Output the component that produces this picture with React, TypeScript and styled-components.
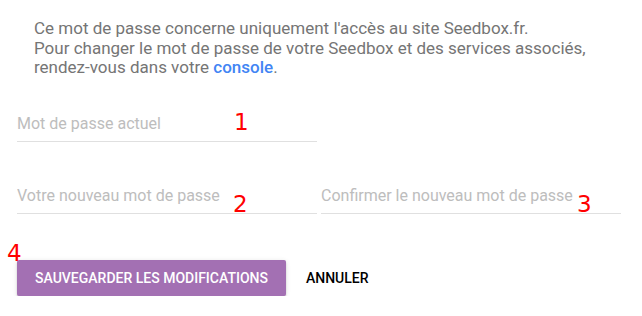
import styled, { createGlobalStyle } from "styled-components";

const GlobalStyle = createGlobalStyle`
  html, body {
    margin: 0;
    padding: 0;
    background: #ffffff;
  }
  body {
    font-family: Roboto, "Liberation Sans", sans-serif;
  }
`;

const Page = styled.div`
  width: 642px;
  padding: 0 21px 0 17px;
  box-sizing: border-box;
`;

const Intro = styled.p`
  margin: 0;
  padding: 19px 0 0 17px;
  font-size: 17px;
  line-height: 19.5px;
  color: #757575;
`;

const Link = styled.a`
  color: #4285f4;
  font-weight: 500;
  text-decoration: none;
`;

const Row = styled.div<{ $top: number }>`
  display: flex;
  gap: 4px;
  margin-top: ${(p) => p.$top}px;
`;

const Field = styled.div`
  position: relative;
  width: 300px;
`;

const Input = styled.input`
  display: block;
  width: 100%;
  height: 35px;
  box-sizing: border-box;
  padding: 0;
  border: none;
  border-bottom: 1px solid #e0e0e0;
  outline: none;
  background: transparent;
  font-family: Roboto, "Liberation Sans", sans-serif;
  font-size: 16px;
  color: #424242;
  &::placeholder {
    color: #bdbdbd;
  }
`;

const Marker = styled.span<{ $left: number; $top: number }>`
  position: absolute;
  left: ${(p) => p.$left}px;
  top: ${(p) => p.$top}px;
  font-family: "DejaVu Sans", sans-serif;
  font-size: 23px;
  line-height: 1;
  color: #ff0000;
  pointer-events: none;
`;

const Actions = styled.div`
  position: relative;
  display: flex;
  align-items: center;
  margin-top: 46px;
`;

const Button = styled.button<{ $primary?: boolean }>`
  height: 36px;
  padding: 0 ${(p) => (p.$primary ? 18 : 20)}px;
  border: none;
  border-radius: 2px;
  font-family: Roboto, "Liberation Sans", sans-serif;
  font-size: 14px;
  font-weight: 500;
  text-transform: uppercase;
  cursor: pointer;
  background: ${(p) => (p.$primary ? "#a370b3" : "transparent")};
  color: ${(p) => (p.$primary ? "#ffffff" : "#000000")};
  box-shadow: ${(p) =>
    p.$primary
      ? "0 2px 2px rgba(0,0,0,0.14), 0 3px 1px -2px rgba(0,0,0,0.2), 0 1px 5px rgba(0,0,0,0.12)"
      : "none"};
`;

export default function App() {
  return (
    <>
      <GlobalStyle />
      <Page>
        <Intro>
          Ce mot de passe concerne uniquement l'accès au site Seedbox.fr.
          <br />
          Pour changer le mot de passe de votre Seedbox et des services associés,
          <br />
          rendez-vous dans votre <Link href="#">console</Link>.
        </Intro>

        <Row $top={29}>
          <Field>
            <Input type="password" placeholder="Mot de passe actuel" />
            <Marker $left={217} $top={4}>1</Marker>
          </Field>
        </Row>

        <Row $top={37}>
          <Field>
            <Input type="password" placeholder="Votre nouveau mot de passe" />
            <Marker $left={216} $top={14}>2</Marker>
          </Field>
          <Field>
            <Input type="password" placeholder="Confirmer le nouveau mot de passe" />
            <Marker $left={256} $top={14}>3</Marker>
          </Field>
        </Row>

        <Actions>
          <Marker $left={-10} $top={-18}>4</Marker>
          <Button $primary>Sauvegarder les modifications</Button>
          <Button>Annuler</Button>
        </Actions>
      </Page>
    </>
  );
}
